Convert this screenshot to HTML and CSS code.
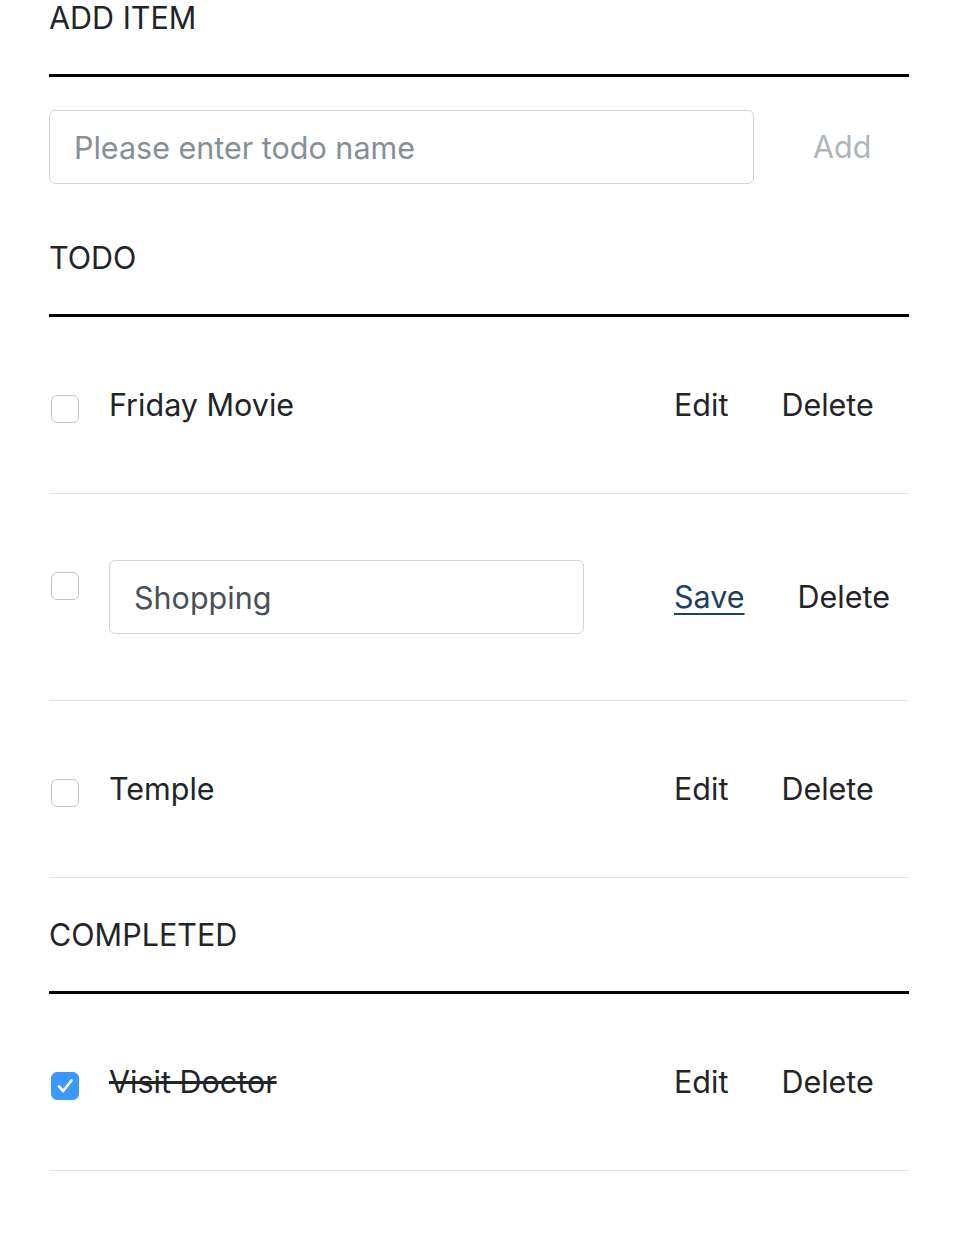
FILE: index.html
```html
<!DOCTYPE html>
<html lang="en">
<head>
<meta charset="utf-8">
<title>Todo</title>
<link rel="stylesheet" href="styles.css">
</head>
<body>
<main class="page">
  <h3 class="heading heading-first">ADD ITEM</h3>
  <form class="add-form">
    <input class="text-input add-input" type="text" placeholder="Please enter todo name">
    <button class="btn btn-add" type="button">Add</button>
  </form>

  <h3 class="heading">TODO</h3>
  <ul class="list">
    <li class="item">
      <span class="check"></span>
      <div class="label-col"><span class="label">Friday Movie</span></div>
      <div class="actions"><button class="btn">Edit</button><button class="btn">Delete</button></div>
    </li>
    <li class="item">
      <span class="check"></span>
      <div class="label-col"><input class="text-input edit-input" type="text" value="Shopping"></div>
      <div class="actions"><button class="btn btn-save">Save</button><button class="btn">Delete</button></div>
    </li>
    <li class="item">
      <span class="check"></span>
      <div class="label-col"><span class="label">Temple</span></div>
      <div class="actions"><button class="btn">Edit</button><button class="btn">Delete</button></div>
    </li>
  </ul>

  <h3 class="heading heading-completed">COMPLETED</h3>
  <ul class="list">
    <li class="item">
      <span class="check checked"><svg width="28" height="28" viewBox="0 0 28 28"><path d="M8 14.5 L12.2 19 L20.5 8.5" fill="none" stroke="#fff" stroke-width="2.6" stroke-linecap="round" stroke-linejoin="round"/></svg></span>
      <div class="label-col"><span class="label done">Visit Doctor</span></div>
      <div class="actions"><button class="btn">Edit</button><button class="btn">Delete</button></div>
    </li>
  </ul>
</main>
</body>
</html>
```

FILE: styles.css
```css
html, body {
  margin: 0;
  padding: 0;
  background: #fff;
}
body {
  font-family: Inter, "Noto Sans", "Liberation Sans", sans-serif;
  color: #212529;
  font-size: 30.5px;
}
.page {
  padding: 0 50px 0 49px;
}
.heading {
  margin: 56px 0 0;
  font-size: 30.5px;
  font-weight: 400;
  line-height: 36px;
  padding-bottom: 38px;
  border-bottom: 3.5px solid #000;
  color: #212529;
}
.heading-first {
  margin-top: 0;
}
.heading-completed {
  margin-top: 39px;
}
.add-form {
  display: flex;
  align-items: center;
  margin: 33px 0 0;
}
.text-input {
  box-sizing: border-box;
  height: 74px;
  border: 1.5px solid #d4d4d4;
  border-radius: 6px;
  padding: 0 0 0 24px;
  font-family: inherit;
  font-size: 30.5px;
  color: #495057;
  background: #fff;
  outline: none;
}
.text-input::placeholder {
  color: #868e96;
}
.add-input {
  width: 705px;
}
.btn {
  border: 0;
  background: none;
  padding: 0;
  font-family: inherit;
  font-size: 30.5px;
  color: #212529;
  line-height: 44px;
  cursor: pointer;
}
.btn-add {
  flex: 1;
  text-align: left;
  padding-left: 59px;
  color: #adb5bd;
}
.list {
  list-style: none;
  margin: 0;
  padding: 0;
}
.item {
  display: flex;
  align-items: center;
  padding: 66px 0;
  border-bottom: 1.5px solid #e5e5e5;
}
.check {
  box-sizing: border-box;
  flex: none;
  width: 28px;
  height: 28px;
  margin: 0 30px 0 2px;
  align-self: flex-start;
  margin-top: 12px;
  border: 1.5px solid #c4c4c4;
  border-radius: 6px;
  background: #fff;
}
.check svg {
  display: block;
  margin: -1.5px;
}
.check.checked {
  background: #3b99fc;
  border-color: #3b99fc;
}
.label-col {
  width: 565px;
  flex: none;
  display: flex;
  align-items: center;
}
.label {
  line-height: 44px;
}
.label.done {
  text-decoration: line-through;
}
.edit-input {
  width: 475px;
}
.actions {
  display: flex;
  gap: 53px;
}
.btn-save {
  color: #1f3f5f;
  text-decoration: underline;
  text-decoration-thickness: 2px;
  text-underline-offset: 5px;
}
```
